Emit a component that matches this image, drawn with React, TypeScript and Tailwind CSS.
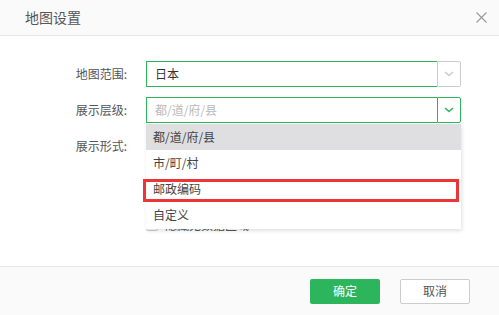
const font = { fontFamily: '"Noto Sans CJK SC", "Noto Sans", sans-serif' };

function Chevron({ color }: { color: string }) {
  return (
    <svg width="10" height="6" viewBox="0 0 10 6" fill="none">
      <path d="M1 1l4 3.5L9 1" stroke={color} strokeWidth="1.6" />
    </svg>
  );
}

const levels = ["都/道/府/县", "市/町/村", "邮政编码", "自定义"];

function App() {
  return (
    <div className="flex h-[315px] w-[499px] flex-col overflow-hidden bg-white text-[12px] text-[#555]" style={font}>
      {/* Header */}
      <div className="flex h-[36px] shrink-0 items-center justify-between border-b border-[#e8e8e8] bg-[#fafafa] pl-[25px] pr-[12px]">
        <span className="text-[14px] text-[#555]">地图设置</span>
        <svg width="11" height="11" viewBox="0 0 11 11">
          <path d="M0.5 0.5l10 10M10.5 0.5l-10 10" stroke="#999" strokeWidth="1.1" />
        </svg>
      </div>

      {/* Body */}
      <div className="flex flex-1 flex-col pt-[25px]">
        <div className="flex h-[26px] items-center">
          <div className="w-[127px] text-right">地图范围:</div>
          <div className="ml-[19px] flex h-[26px]">
            <div className="flex w-[291px] items-center border-y border-l border-[#2db55d] pl-[8px] text-[#333]">日本</div>
            <div className="flex w-[24px] items-center justify-center rounded-r-[2px] border border-[#ccc]">
              <Chevron color="#ccc" />
            </div>
          </div>
        </div>

        <div className="mt-[10px] flex h-[26px] items-center">
          <div className="w-[127px] text-right">展示层级:</div>
          <div className="relative z-10 ml-[19px] flex h-[26px]">
            <div className="flex w-[291px] items-center border-y border-l border-[#2db55d] pl-[8px] text-[#bbb]">都/道/府/县</div>
            <div className="flex w-[24px] items-center justify-center rounded-r-[2px] border border-[#2db55d]">
              <Chevron color="#2db55d" />
            </div>

            {/* Dropdown */}
            <div className="absolute left-0 top-full mt-[1px] w-[315px] bg-white pb-[1px] shadow-[1px_2px_4px_rgba(0,0,0,0.12)]">
              {levels.map((lv, i) => (
                <div
                  key={lv}
                  className={`relative flex h-[26px] items-center pl-[7px] text-[#444] ${i === 0 ? "bg-[#dfdfe1]" : ""}`}
                >
                  {lv}
                  {i === 2 && (
                    <span className="absolute bottom-0 left-[-3px] right-[2px] top-[3px] border-[3px] border-[#ee3535]" />
                  )}
                </div>
              ))}
            </div>
          </div>
        </div>

        <div className="mt-[10px] flex h-[26px] items-center">
          <div className="w-[127px] text-right">展示形式:</div>
        </div>

        <div className="mt-[57px] flex items-center pl-[146px]">
          <span className="h-[12px] w-[12px] rounded-[2px] border border-[#ccc] bg-white" />
          <span className="ml-[7px]">隐藏无数据区域</span>
        </div>
      </div>

      {/* Footer */}
      <div className="flex h-[49px] shrink-0 items-center justify-end gap-[20px] border-t border-[#e8e8e8] bg-[#fafafa] pr-[29px]">
        <button className="h-[25px] w-[70px] rounded-[2px] bg-[#2db55d] text-white">确定</button>
        <button className="h-[25px] w-[70px] rounded-[2px] border border-[#ccc] bg-white text-[#555]">取消</button>
      </div>
    </div>
  );
}

export default App;
